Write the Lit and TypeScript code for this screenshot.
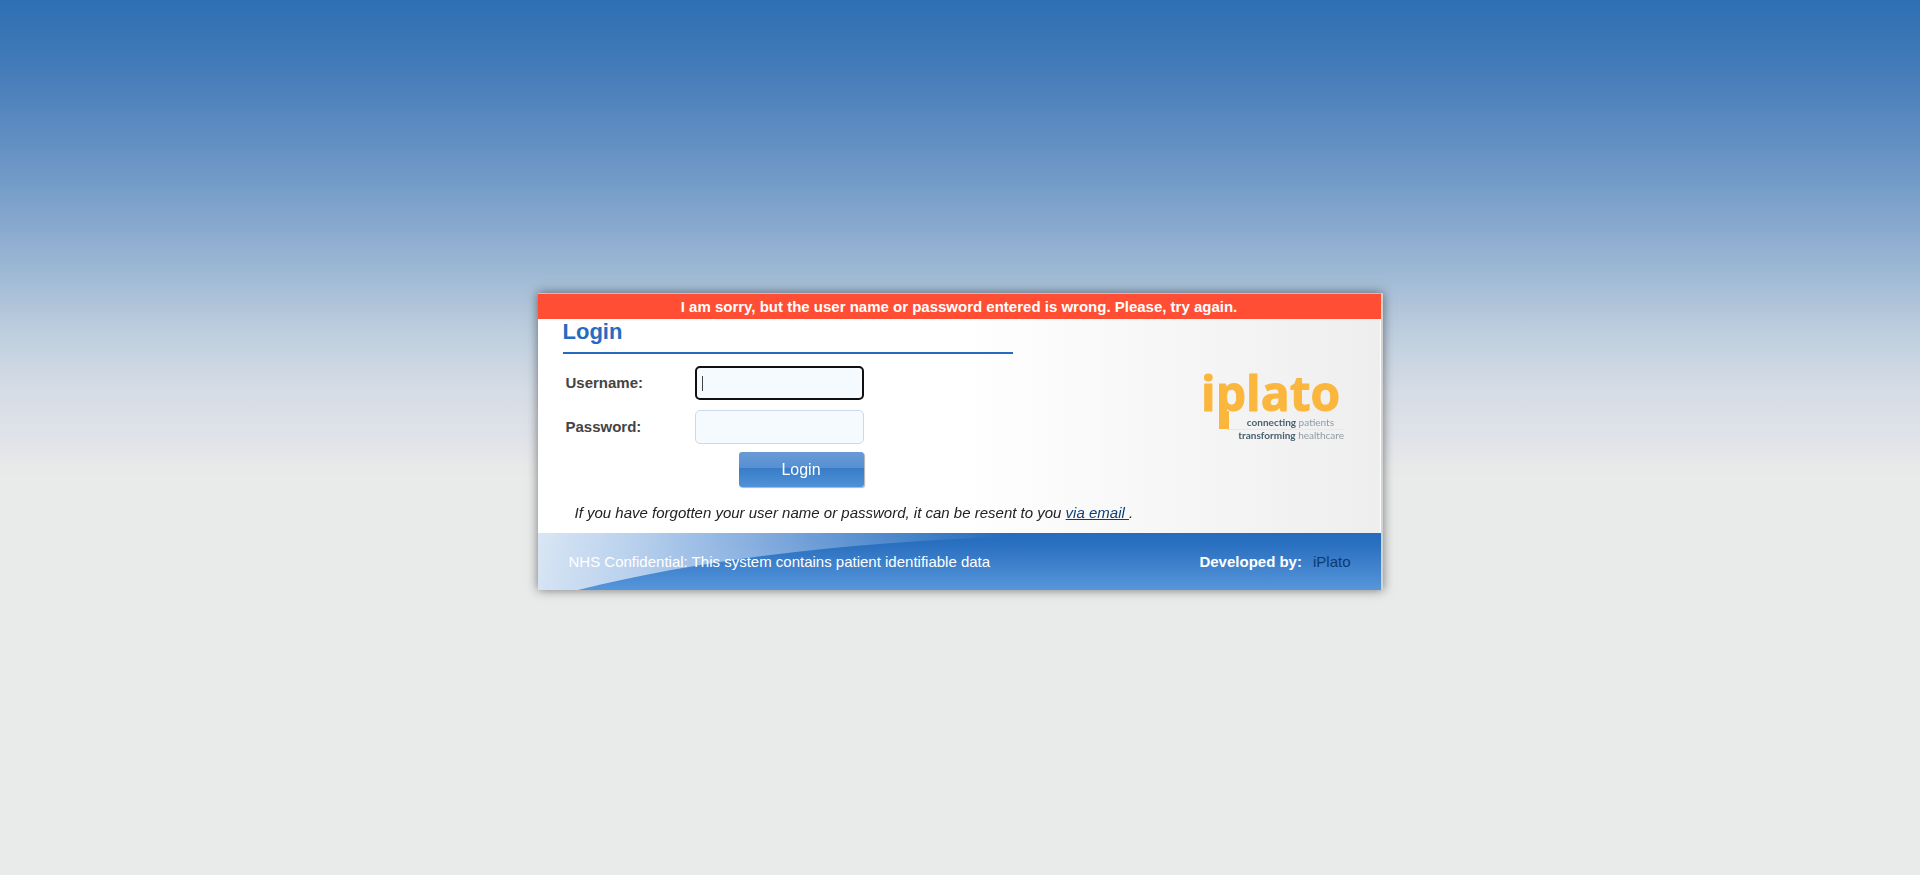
import { LitElement, html, css, svg } from "lit";
import { customElement, state, query } from "lit/decorators.js";

@customElement("iplato-logo")
class IplatoLogo extends LitElement {
  static styles = css`
    :host { display: block; width: 141px; }
    svg { display: block; width: 100%; overflow: visible; }
    .word { font: 700 48px "Open Sans", sans-serif; fill: #fbb63d; stroke: #fbb63d; stroke-width: 1; stroke-linejoin: round; }
    .tag { font: 10px Lato, sans-serif; fill: #8c9ca4; text-anchor: end; }
    .strong { font-weight: 700; fill: #48616e; }
  `;
  render() {
    return html`<svg viewBox="0 0 141 70" role="img" aria-label="iplato">
      ${svg`
        <text class="word" x="-4" y="36">iplato</text>
        <rect x="14" y="36" width="10" height="18" fill="#fbb63d"></rect>
        <rect x="22" y="54" width="117" height="1" fill="#f7e6cc"></rect>
        <text class="tag" x="129" y="51"><tspan class="strong">connecting</tspan> patients</text>
        <text class="tag" x="139" y="64"><tspan class="strong">transforming</tspan> healthcare</text>`}
    </svg>`;
  }
}

@customElement("app-root")
class AppRoot extends LitElement {
  static styles = css`
    :host {
      display: flex;
      flex-direction: column;
      align-items: center;
      justify-content: center;
      box-sizing: border-box;
      min-height: 100vh;
      padding-top: 8px;
      font: 15px/20px "Liberation Sans", Arial, sans-serif;
      color: #222;
      background: #e9ebea linear-gradient(#2f6fb3 0, #3472b3 20px, #407ab8 60px, #4d81bb 90px, #6390c3 145px,
        #88a9cf 227px, #a2bbd5 279px, #bfcfdf 335px, #d5dce5 390px, #e0e2e9 435px, #e9ebea 478px) no-repeat;
    }
    .card {
      width: 843px;
      max-width: 100%;
      border-top: 1px solid #b4c4dc;
      border-right: 2px solid #d2d2d2;
      box-shadow: 0 0 10px rgba(0, 0, 0, 0.5);
    }
    .error {
      background: #ff4e33;
      color: #fff;
      font-weight: bold;
      line-height: 25px;
      text-align: center;
    }
    .body {
      display: flex;
      justify-content: space-between;
      padding: 0 34px 0 25px;
      border-right: 1px solid #fff;
      background: linear-gradient(to right, #fff 50%, #eee);
    }
    h1 {
      width: 450px;
      margin: 0;
      padding-bottom: 7px;
      border-bottom: 2px solid #256cc0;
      color: #256cc0;
      font-size: 22px;
      line-height: 26px;
    }
    form { width: 301px; padding-top: 12px; }
    .row {
      display: grid;
      grid-template-columns: 129px 1fr;
      align-items: center;
      padding-left: 3px;
      margin-bottom: 10px;
    }
    label { color: #444; font-weight: bold; }
    input {
      box-sizing: border-box;
      width: 100%;
      height: 34px;
      margin: 0;
      padding: 0 6px;
      border: 1px solid #c8daf2;
      border-radius: 5px;
      background: #f5fafe;
      font: inherit;
      outline: none;
    }
    input:focus {
      border: 2px solid #101010;
      caret-color: transparent;
      background: linear-gradient(#444, #444) 5px center / 1px 15px no-repeat #f5fafe;
    }
    button {
      display: block;
      width: 125px;
      height: 35px;
      margin: -2px 0 0 auto;
      padding: 0;
      border: 0;
      border-radius: 3px;
      background: linear-gradient(#6a9ad6, #5690d2 45%, #387cc8 46%, #5092d8);
      box-shadow: 1px 1px 1px rgba(0, 0, 0, 0.3);
      color: #fff;
      font: 16px "Liberation Sans", Arial, sans-serif;
    }
    .forgot { margin: 0; padding: 16px 12px 10px; font-style: italic; }
    .forgot a { color: #0f3f73; }
    iplato-logo { flex: none; margin-top: 56px; }
    footer {
      position: relative;
      display: flex;
      justify-content: space-between;
      align-items: center;
      height: 57px;
      padding: 0 30px 0 31px;
      background: linear-gradient(#256cbc, #2a70c0 20%, #5796da);
      color: #fff;
    }
    .swoosh { position: absolute; left: 0; top: 0; }
    .note { position: relative; }
    .dev { display: flex; gap: 11px; }
    .dev a { color: #0b3a70; text-decoration: none; }
  `;

  @state() private error = "I am sorry, but the user name or password entered is wrong. Please, try again.";
  @query("#user") private user!: HTMLInputElement;

  firstUpdated() {
    this.user.focus();
  }

  render() {
    return html`
      <main class="card">
        <div class="error" role="alert">${this.error}</div>
        <div class="body">
          <div>
            <h1>Login</h1>
            <form @submit=${(e: Event) => e.preventDefault()}>
              <div class="row"><label for="user">Username:</label><input id="user" type="text" /></div>
              <div class="row"><label for="pass">Password:</label><input id="pass" type="password" /></div>
              <button type="submit">Login</button>
            </form>
            <p class="forgot">If you have forgotten your user name or password, it can be resent to you <a href="#">via email </a>.</p>
          </div>
          <iplato-logo></iplato-logo>
        </div>
        <footer>
          <svg class="swoosh" width="480" height="57" viewBox="0 0 480 57" aria-hidden="true">
            <defs>
              <linearGradient id="fade" gradientUnits="userSpaceOnUse" x1="0" x2="440" y1="0" y2="110">
                <stop offset="0" stop-color="#dae6f4"></stop>
                <stop offset="0.2" stop-color="#c2d7f0" stop-opacity="0.95"></stop>
                <stop offset="0.45" stop-color="#b4cdee" stop-opacity="0.7"></stop>
                <stop offset="1" stop-color="#a0c0e8" stop-opacity="0"></stop>
              </linearGradient>
            </defs>
            <path d="M0 0H480V3C330 9 180 22 40 57H0Z" fill="url(#fade)"></path>
          </svg>
          <span class="note">NHS Confidential: This system contains patient identifiable data</span>
          <span class="dev"><b>Developed by:</b><a href="#">iPlato</a></span>
        </footer>
      </main>
    `;
  }
}
